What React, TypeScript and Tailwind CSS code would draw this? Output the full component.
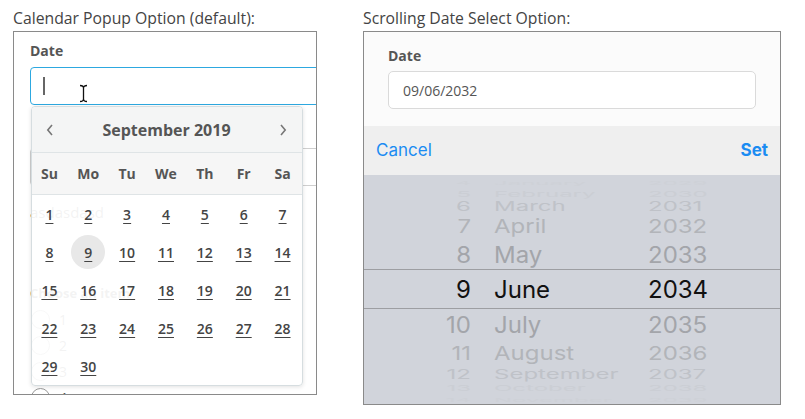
import React from "react";

const weekdays = ["Su", "Mo", "Tu", "We", "Th", "Fr", "Sa"];
const days: (number | null)[] = [
  1, 2, 3, 4, 5, 6, 7,
  8, 9, 10, 11, 12, 13, 14,
  15, 16, 17, 18, 19, 20, 21,
  22, 23, 24, 25, 26, 27, 28,
  29, 30,
];

type Row = { d: string; m: string; y: string; row: string; inner: string };

const above: Row[] = [
  { d: "4", m: "January", y: "2029", row: "h-[11px]", inner: "scale-y-[0.2] text-[#ced1d7]" },
  { d: "5", m: "February", y: "2030", row: "h-[12px]", inner: "scale-y-[0.33] text-[#cbced4]" },
  { d: "6", m: "March", y: "2031", row: "h-[13px]", inner: "scale-y-[0.55] text-[#bfc2c8]" },
  { d: "7", m: "April", y: "2032", row: "h-[28px]", inner: "scale-y-[0.8] text-[#b2b4b9]" },
  { d: "8", m: "May", y: "2033", row: "h-[30px]", inner: "scale-y-[0.93] text-[#a3a5aa]" },
];
const below: Row[] = [
  { d: "10", m: "July", y: "2035", row: "h-[29px]", inner: "scale-y-[0.93] text-[#a3a5aa]" },
  { d: "11", m: "August", y: "2036", row: "h-[28px]", inner: "scale-y-[0.8] text-[#b2b4b9]" },
  { d: "12", m: "September", y: "2037", row: "h-[14px]", inner: "scale-y-[0.55] text-[#bfc2c8]" },
  { d: "13", m: "October", y: "2038", row: "h-[12px]", inner: "scale-y-[0.33] text-[#cbced4]" },
  { d: "14", m: "November", y: "2039", row: "h-[12px]", inner: "scale-y-[0.2] text-[#ced1d7]" },
];

function PickerRow({ r }: { r: Row }) {
  return (
    <div className={`flex items-center shrink-0 ${r.row}`}>
      <div className={`flex items-center text-[24px] leading-[28px] translate-y-[2px] ${r.inner}`}>
        <span className="ml-[56px] w-[51px] text-right">{r.d}</span>
        <span className="ml-[23px] w-[154px]">{r.m}</span>
        <span>{r.y}</span>
      </div>
    </div>
  );
}

export default function App() {
  return (
    <div
      className="w-[805px] h-[419px] bg-white flex overflow-hidden"
      style={{ fontFamily: '"Open Sans", sans-serif' }}
    >
      {/* Left column */}
      <div className="ml-[13px] w-[304px] pt-[8px]">
        <div className="text-[15.75px] leading-[20px] h-[20px] mb-[3px] text-[#444] whitespace-nowrap">
          Calendar Popup Option (default):
        </div>
        <div className="relative h-[364px] border border-[#8a8a8a] overflow-hidden bg-white">
          <div className="pl-[16px] pt-[10px]">
            <div className="text-[14px] leading-[18px] font-bold text-[#555]">Date</div>
            <div className="relative mt-[7px] w-[300px] h-[38px] border border-[#2da8e0] rounded-[4px] flex items-center">
              <div className="ml-[12px] w-[1.5px] h-[18px] bg-[#666]" />
              <svg
                className="absolute left-[48px] top-[16px]"
                width="9"
                height="19"
                viewBox="0 0 9 19"
                fill="none"
                stroke="#111"
                strokeWidth="1.3"
              >
                <path d="M1 1.5 C3 1.5 4.5 2 4.5 4 C4.5 2 6 1.5 8 1.5" />
                <path d="M4.5 4 V15" />
                <path d="M1 17.5 C3 17.5 4.5 17 4.5 15 C4.5 17 6 17.5 8 17.5" />
              </svg>
            </div>
            <div className="mt-[43px] w-[300px] h-[38px] border border-[#cfcfcf] rounded-[4px]" />
            <div className="mt-[16px] text-[15px] leading-[20px] text-[#555]">asdasdasd</div>
            <div className="mt-[62px] text-[13px] leading-[18px] font-bold text-[#555]">
              Choose an item
            </div>
            <div className="mt-[4px] flex flex-col">
              {["1", "2", "3", "4"].map((n) => (
                <div key={n} className="h-[26px] flex items-center">
                  <div className="ml-[1px] w-[19px] h-[19px] rounded-full border border-[#9a9a9a]" />
                  <span className="ml-[9px] text-[14px] text-[#555]">{n}</span>
                </div>
              ))}
            </div>
          </div>

          {/* Calendar popup */}
          <div className="absolute left-[17px] top-[74px] w-[272px] h-[280px] rounded-[4px] border border-[#d6dde0] bg-white/[0.93] shadow-[0_1px_4px_rgba(0,0,0,0.12)] overflow-hidden flex flex-col">
            <div className="h-[45px] bg-[#f3f4f4]/[0.95] flex items-center justify-between pl-[14px] pr-[15px]">
              <svg width="8" height="12" viewBox="0 0 8 12" fill="none" stroke="#777" strokeWidth="1.6">
                <path d="M6 1 L1.8 6 L6 11" />
              </svg>
              <div className="text-[16px] font-bold text-[#555] leading-[20px]">September 2019</div>
              <svg width="8" height="12" viewBox="0 0 8 12" fill="none" stroke="#777" strokeWidth="1.6">
                <path d="M2 1 L6.2 6 L2 11" />
              </svg>
            </div>
            <div className="h-[43px] border-y border-[#dfe4e6] bg-[#f5f6f6]/[0.95] flex items-center">
              <div className="-ml-[2px] w-[272px] grid grid-cols-7">
                {weekdays.map((w) => (
                  <div key={w} className="text-center text-[14px] font-bold text-[#555] leading-[20px]">
                    {w}
                  </div>
                ))}
              </div>
            </div>
            <div className="-ml-[2px] w-[272px] grid grid-cols-7 auto-rows-[38px]">
              {days.map((d, i) => (
                <div key={i} className="flex items-center justify-center">
                  {d !== null && (
                    <div
                      className={`w-[34px] h-[34px] rounded-full flex items-center justify-center text-[14px] font-semibold text-[#444] underline underline-offset-[3px] ${
                        d === 9 ? "bg-[#e8e8e8]" : ""
                      }`}
                    >
                      {d}
                    </div>
                  )}
                </div>
              ))}
            </div>
          </div>
        </div>
      </div>

      {/* Right column */}
      <div className="ml-[46px] w-[418px] pt-[8px]">
        <div className="text-[15.75px] leading-[20px] h-[20px] mb-[3px] text-[#444] whitespace-nowrap">
          Scrolling Date Select Option:
        </div>
        <div className="h-[374px] border border-[#8a8a8a] overflow-hidden flex flex-col">
          <div className="h-[94px] shrink-0 bg-[#fbfbfb] pl-[24px] pt-[15px]">
            <div className="text-[14px] leading-[18px] font-bold text-[#555]">Date</div>
            <div className="mt-[6px] w-[368px] h-[38px] bg-white border border-[#dadada] rounded-[5px] flex items-center pl-[14px] text-[14px] text-[#555]">
              09/06/2032
            </div>
          </div>
          <div
            className="h-[49px] shrink-0 bg-[#efefef] flex items-center justify-between px-[12px] text-[17px] text-[#1b8cf2]"
            style={{ fontFamily: "Inter, sans-serif" }}
          >
            <span>Cancel</span>
            <span className="font-bold">Set</span>
          </div>
          <div
            className="flex-1 bg-[#d1d4db] flex flex-col overflow-hidden"
            style={{ fontFamily: "Inter, sans-serif" }}
          >
            {above.map((r) => (
              <PickerRow key={r.d} r={r} />
            ))}
            <div className="h-[40px] shrink-0 border-y border-[#9d9ea2] flex items-center text-[#111]">
              <div className="flex items-center text-[24px] leading-[28px] translate-y-[1px]">
                <span className="ml-[56px] w-[51px] text-right">9</span>
                <span className="ml-[23px] w-[154px]">June</span>
                <span>2034</span>
              </div>
            </div>
            {below.map((r) => (
              <PickerRow key={r.d} r={r} />
            ))}
          </div>
        </div>
      </div>
    </div>
  );
}
